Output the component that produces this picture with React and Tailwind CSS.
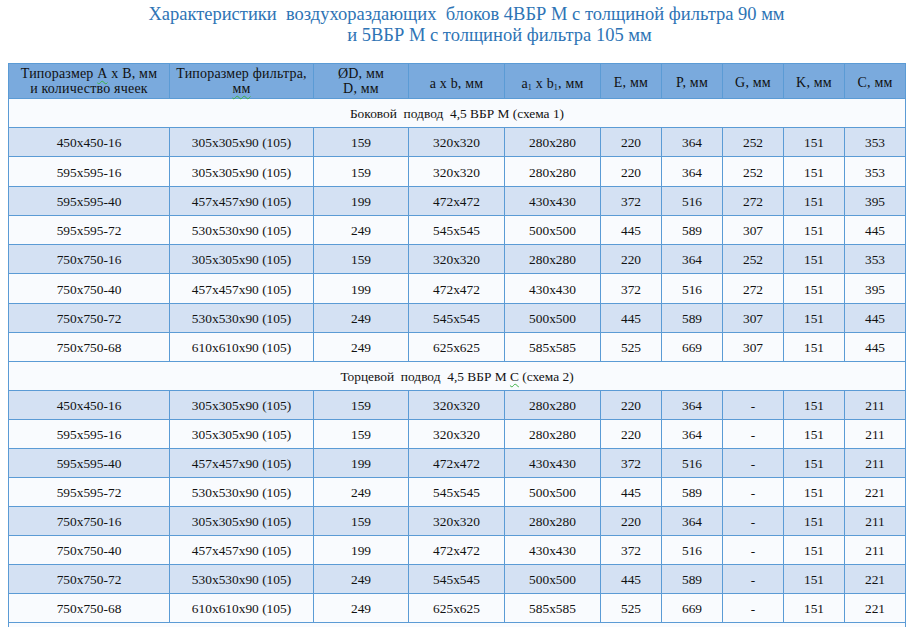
import React from "react";

const sec1 = [
  ["450x450-16", "305x305x90 (105)", "159", "320x320", "280x280", "220", "364", "252", "151", "353"],
  ["595x595-16", "305x305x90 (105)", "159", "320x320", "280x280", "220", "364", "252", "151", "353"],
  ["595x595-40", "457x457x90 (105)", "199", "472x472", "430x430", "372", "516", "272", "151", "395"],
  ["595x595-72", "530x530x90 (105)", "249", "545x545", "500x500", "445", "589", "307", "151", "445"],
  ["750x750-16", "305x305x90 (105)", "159", "320x320", "280x280", "220", "364", "252", "151", "353"],
  ["750x750-40", "457x457x90 (105)", "199", "472x472", "430x430", "372", "516", "272", "151", "395"],
  ["750x750-72", "530x530x90 (105)", "249", "545x545", "500x500", "445", "589", "307", "151", "445"],
  ["750x750-68", "610x610x90 (105)", "249", "625x625", "585x585", "525", "669", "307", "151", "445"],
];
const sec2 = [
  ["450x450-16", "305x305x90 (105)", "159", "320x320", "280x280", "220", "364", "-", "151", "211"],
  ["595x595-16", "305x305x90 (105)", "159", "320x320", "280x280", "220", "364", "-", "151", "211"],
  ["595x595-40", "457x457x90 (105)", "199", "472x472", "430x430", "372", "516", "-", "151", "211"],
  ["595x595-72", "530x530x90 (105)", "249", "545x545", "500x500", "445", "589", "-", "151", "221"],
  ["750x750-16", "305x305x90 (105)", "159", "320x320", "280x280", "220", "364", "-", "151", "211"],
  ["750x750-40", "457x457x90 (105)", "199", "472x472", "430x430", "372", "516", "-", "151", "211"],
  ["750x750-72", "530x530x90 (105)", "249", "545x545", "500x500", "445", "589", "-", "151", "221"],
  ["750x750-68", "610x610x90 (105)", "249", "625x625", "585x585", "525", "669", "-", "151", "221"],
];

const widths = [161, 144, 95, 96, 96, 61, 61, 61, 61, 61];

function Rows({ rows, tall }) {
  return rows.map((r, i) => (
    <tr
      key={i}
      className={
        (i % 2 === 0 ? "bg-[#d4e1f3] " : "bg-[#f9fbfe] ") + (tall ? "h-[29.25px]" : "h-[29px]")
      }
    >
      {r.map((c, j) => (
        <td key={j} className="border border-[#5b9bd5] text-center align-middle p-0 pt-[2px] leading-none">
          {c}
        </td>
      ))}
    </tr>
  ));
}

const th = "border border-[#5b9bd5] font-normal text-center p-0 text-[14px] tracking-[0.2px]";

export default function App() {
  const wavy = "underline decoration-wavy decoration-[#3cb043] underline-offset-2 decoration-1";
  return (
    <div
      className="w-[917px] h-[627px] overflow-hidden bg-white text-[#111]"
      style={{ fontFamily: '"Liberation Serif", serif' }}
    >
      <div className="pt-[4px] h-[63px] text-[#2e74b5] text-[18.5px] leading-[21px]">
        <div className="text-center pl-[16px] whitespace-pre">
          Характеристики  воздухораздающих  блоков 4ВБР М с толщиной фильтра 90 мм
        </div>
        <div className="text-center pl-[82px] whitespace-pre">и 5ВБР М с толщиной фильтра 105 мм</div>
      </div>
      <table className="ml-[8px] table-fixed border-collapse w-[898px] text-[13.4px]">
        <colgroup>
          {widths.map((w, i) => (
            <col key={i} style={{ width: w }} />
          ))}
        </colgroup>
        <thead>
          <tr className="bg-[#7aaadd] h-[35px]">
            <th className={th + " leading-[15px]"}>
              Типоразмер <span className={wavy}>А</span> х В, мм
              <br />и количество ячеек
            </th>
            <th className={th + " leading-[15px]"}>
              Типоразмер фильтра,
              <br />
              <span className={wavy}>мм</span>
            </th>
            <th className={th + " leading-[15px]"}>
              ØD, мм
              <br />D, мм
            </th>
            <th className={th + " pt-[4px]"}>a x b, мм</th>
            <th className={th + " pt-[4px]"}>
              a<sub className="text-[8px]">1</sub> x b<sub className="text-[8px]">1</sub>, мм
            </th>
            <th className={th + " pt-[2px]"}>E, мм</th>
            <th className={th + " pt-[2px]"}>P, мм</th>
            <th className={th + " pt-[2px]"}>G, мм</th>
            <th className={th + " pt-[2px]"}>K, мм</th>
            <th className={th + " pt-[2px]"}>C, мм</th>
          </tr>
        </thead>
        <tbody>
          <tr className="bg-[#f9fbfe] h-[29px]">
            <td colSpan={10} className="border border-[#5b9bd5] text-center whitespace-pre p-0 pt-[2px] leading-none">
              Боковой  подвод  4,5 ВБР М (схема 1)
            </td>
          </tr>
          <Rows rows={sec1} tall />
          <tr className="bg-[#f9fbfe] h-[29px]">
            <td colSpan={10} className="border border-[#5b9bd5] text-center whitespace-pre p-0 pt-[2px] leading-none">
              Торцевой  подвод  4,5 ВБР М <span className={wavy}>С</span> (схема 2)
            </td>
          </tr>
          <Rows rows={sec2} />
          <tr className="bg-[#f9fbfe] h-[29px]">
            <td colSpan={10} className="border border-[#5b9bd5] p-0">&nbsp;</td>
          </tr>
        </tbody>
      </table>
    </div>
  );
}
